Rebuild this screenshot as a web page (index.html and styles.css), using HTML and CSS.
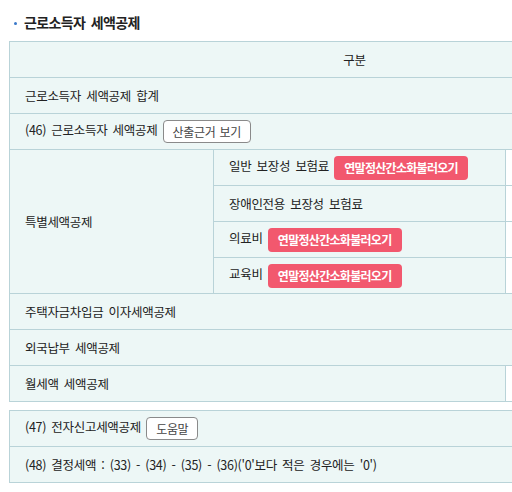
FILE: index.html
```html
<!DOCTYPE html>
<html lang="ko">
<head>
    <meta charset="UTF-8">
    <title>근로소득자 세액공제</title>
    <link rel="stylesheet" href="styles.css">
</head>
<body>
    <div class="page">
        <h2 class="section-title">근로소득자 세액공제</h2>

        <table class="tax-table">
            <colgroup>
                <col class="col-a">
                <col class="col-b">
                <col class="col-c">
                <col class="col-d">
            </colgroup>
            <tr>
                <th colspan="3">구분</th>
                <th></th>
            </tr>
            <tr>
                <td colspan="3">근로소득자 세액공제 합계</td>
                <td class="value"></td>
            </tr>
            <tr>
                <td colspan="3">(46) 근로소득자 세액공제 <button class="btn-line">산출근거 보기</button></td>
                <td class="value"></td>
            </tr>
            <tr>
                <td rowspan="4">특별세액공제</td>
                <td>일반 보장성 보험료 <button class="btn-pink">연말정산간소화불러오기</button></td>
                <td class="value"></td>
                <td class="value"></td>
            </tr>
            <tr>
                <td>장애인전용 보장성 보험료</td>
                <td class="value"></td>
                <td class="value"></td>
            </tr>
            <tr>
                <td>의료비 <button class="btn-pink">연말정산간소화불러오기</button></td>
                <td class="value"></td>
                <td class="value"></td>
            </tr>
            <tr>
                <td>교육비 <button class="btn-pink">연말정산간소화불러오기</button></td>
                <td class="value"></td>
                <td class="value"></td>
            </tr>
            <tr>
                <td colspan="3">주택자금차입금 이자세액공제</td>
                <td class="value"></td>
            </tr>
            <tr>
                <td colspan="3">외국납부 세액공제</td>
                <td class="value"></td>
            </tr>
            <tr>
                <td colspan="2">월세액 세액공제</td>
                <td class="value"></td>
                <td class="value"></td>
            </tr>
        </table>

        <table class="tax-table second">
            <colgroup>
                <col class="col-a">
                <col class="col-b">
                <col class="col-c">
                <col class="col-d">
            </colgroup>
            <tr>
                <td colspan="3">(47) 전자신고세액공제 <button class="btn-line">도움말</button></td>
                <td class="value"></td>
            </tr>
            <tr>
                <td colspan="3">(48) 결정세액 : (33) - (34) - (35) - (36)('0'보다 적은 경우에는 '0')</td>
                <td class="value"></td>
            </tr>
        </table>
    </div>
</body>
</html>
```

FILE: styles.css
```css
html, body {
    margin: 0;
    padding: 0;
    overflow: hidden;
}
body {
    font-family: "Noto Sans CJK KR", "Noto Sans", sans-serif;
    color: #222;
    background: #fff;
}
.page {
    padding: 11px 0 0 9px;
    width: 1100px;
}
.section-title {
    position: relative;
    margin: 0 0 8px 0;
    padding-left: 15px;
    font-size: 14px;
    font-weight: 600;
    letter-spacing: -0.6px;
    word-spacing: 2px;
    line-height: 22px;
    color: #222;
}
.section-title::before {
    content: "";
    position: absolute;
    left: 5px;
    top: 11px;
    width: 3px;
    height: 3px;
    border-radius: 50%;
    background: #3a78c9;
}
.tax-table {
    border-collapse: collapse;
    table-layout: fixed;
    width: 1000px;
}
.tax-table.second {
    margin-top: 8px;
}
.col-a { width: 204px; }
.col-b { width: 292px; }
.col-c { width: 194px; }
.col-d { width: 310px; }
.tax-table th,
.tax-table td {
    height: 35px;
    padding: 0 0 0 15px;
    border: 1px solid #b9d3d8;
    background: #edf7f6;
    font-size: 12.5px;
    font-weight: 400;
    letter-spacing: -0.3px;
    word-spacing: 2px;
    text-align: left;
    white-space: nowrap;
    line-height: 18px;
}
.tax-table th {
    text-align: center;
    padding: 0;
}
.tax-table td.value {
    background: #fff;
}
.btn-line {
    font-family: inherit;
    font-size: 12px;
    letter-spacing: -0.3px;
    word-spacing: 1px;
    color: #444;
    background: #fff;
    border: 1px solid #8a8a8a;
    border-radius: 4px;
    height: 23px;
    padding: 0 9px;
    margin-left: 0;
    vertical-align: middle;
}
.btn-pink {
    font-family: inherit;
    font-size: 12px;
    font-weight: 600;
    letter-spacing: -0.7px;
    color: #fff;
    background: #f2586e;
    border: none;
    border-radius: 4px;
    height: 24px;
    padding: 0 10px;
    margin-left: 0;
    vertical-align: middle;
}
```
